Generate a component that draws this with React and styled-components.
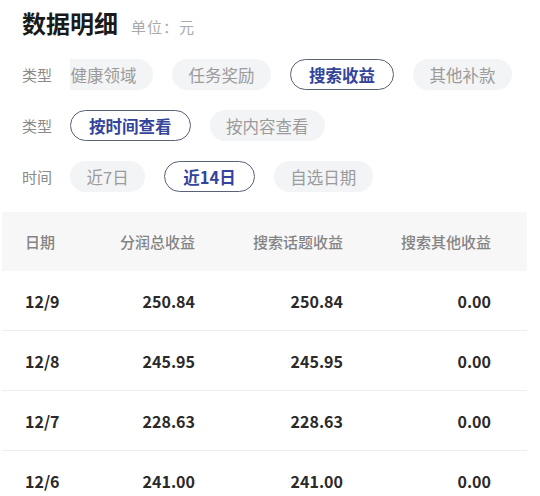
import {useEffect, useRef} from 'react';
import styled, {createGlobalStyle} from 'styled-components';

const GlobalStyle = createGlobalStyle`
  body {
    margin: 0;
    background: #ffffff;
    font-family: "Noto Sans CJK SC", "Noto Sans", sans-serif;
  }
`;

const filters = [
  {label: '类型', items: ['健康领域', '任务奖励', '搜索收益', '其他补款'], active: 2, scroll: 16},
  {label: '类型', items: ['按时间查看', '按内容查看'], active: 0},
  {label: '时间', items: ['近7日', '近14日', '自选日期'], active: 1}
];

const rows = [
  ['12/9', '250.84', '250.84', '0.00'],
  ['12/8', '245.95', '245.95', '0.00'],
  ['12/7', '228.63', '228.63', '0.00'],
  ['12/6', '241.00', '241.00', '0.00']
];

function FilterRow({label, items, active, scroll}) {
  const track = useRef(null);
  useEffect(() => {
    if (track.current && scroll) {
      track.current.scrollLeft = scroll;
    }
  }, [scroll]);
  return (
      <StyledFilterRow>
        <StyledFilterLabel>{label}</StyledFilterLabel>
        <StyledChipTrack ref={track}>
          {items.map((item, index) => (
              <StyledChip key={item} $active={index === active}>{item}</StyledChip>
          ))}
        </StyledChipTrack>
      </StyledFilterRow>
  );
}

export default function App() {
  return (
      <>
        <GlobalStyle/>
        <StyledPage>
          <StyledTitleBar>
            <StyledTitle>数据明细</StyledTitle>
            <StyledUnit>单位：元</StyledUnit>
          </StyledTitleBar>
          <StyledFilters>
            {filters.map((f, i) => <FilterRow key={i} {...f}/>)}
          </StyledFilters>
          <StyledTable>
            <StyledHeadRow>
              <StyledCell>日期</StyledCell>
              <StyledCell $right>分润总收益</StyledCell>
              <StyledCell $right>搜索话题收益</StyledCell>
              <StyledCell $right>搜索其他收益</StyledCell>
            </StyledHeadRow>
            {rows.map(row => (
                <StyledDataRow key={row[0]}>
                  {row.map((value, i) => (
                      <StyledCell key={i} $right={i > 0}>{value}</StyledCell>
                  ))}
                </StyledDataRow>
            ))}
          </StyledTable>
        </StyledPage>
      </>
  );
}

const StyledPage = styled.div`
  width: 540px;
  height: 496px;
  overflow: hidden;
`;

const StyledTitleBar = styled.div`
  display: flex;
  align-items: baseline;
  padding: 9px 0 0 22px;
  height: 38px;
  box-sizing: border-box;
`;

const StyledTitle = styled.h1`
  margin: 0;
  font-size: 24px;
  font-weight: 700;
  color: #1a1a1a;
  line-height: 28px;
`;

const StyledUnit = styled.span`
  margin-left: 13px;
  font-size: 15px;
  letter-spacing: 1px;
  color: #aaaaaa;
`;

const StyledFilters = styled.div`
  display: flex;
  flex-direction: column;
  gap: 20px;
  padding: 21px 0 0 22px;
`;

const StyledFilterRow = styled.div`
  display: flex;
  align-items: center;
  height: 31px;
`;

const StyledFilterLabel = styled.span`
  width: 48px;
  flex: none;
  font-size: 15px;
  color: #8a8a8a;
`;

const StyledChipTrack = styled.div`
  display: flex;
  gap: 19px;
  overflow: hidden;
  flex: 1;
  min-width: 0;
  padding-right: 40px;
`;

const StyledChip = styled.span`
  flex: none;
  display: flex;
  align-items: center;
  height: 31px;
  box-sizing: border-box;
  padding: 0 ${p => p.$active ? '18px' : '16.5px'};
  border-radius: 16px;
  font-size: 16.5px;
  background: ${p => p.$active ? '#ffffff' : '#f3f4f6'};
  border: ${p => p.$active ? '1.5px solid #5a6178' : 'none'};
  color: ${p => p.$active ? '#33449a' : '#9b9b9b'};
  font-weight: ${p => p.$active ? 700 : 400};
`;

const StyledTable = styled.div`
  margin: 20px 13px 0 2px;
`;

const StyledHeadRow = styled.div`
  display: grid;
  grid-template-columns: minmax(0, 1fr) repeat(3, 148px);
  align-items: center;
  height: 59px;
  padding: 0 36px 0 23px;
  background: #f7f7f8;
  font-size: 15px;
  font-weight: 500;
  color: #848484;
`;

const StyledDataRow = styled.div`
  display: grid;
  grid-template-columns: minmax(0, 1fr) repeat(3, 148px);
  align-items: center;
  height: 59px;
  padding: 0 36px 0 23px;
  border-bottom: 1px solid #eeeeee;
  font-size: 16px;
  font-weight: 700;
  color: #2a2a2a;
`;

const StyledCell = styled.span`
  white-space: nowrap;
  text-align: ${p => p.$right ? 'right' : 'left'};
`;
